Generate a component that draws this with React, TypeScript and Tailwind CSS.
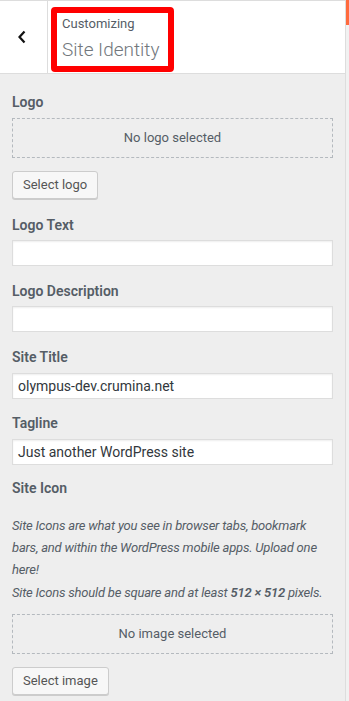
import React from 'react';

const font = "font-['Roboto','Noto_Sans',sans-serif]";

const Label: React.FC<{ text: string; className?: string }> = ({ text, className = '' }) => (
  <div className={`text-[14px] leading-[20px] font-semibold text-[#555d66] ${className}`}>{text}</div>
);

const TextInput: React.FC<{ value?: string; className?: string }> = ({ value = '', className = '' }) => (
  <div
    className={`h-[26px] bg-white border border-[#ddd] shadow-[inset_0_1px_2px_rgba(0,0,0,0.07)] px-[5px] text-[14px] leading-[24px] text-[#32373c] ${className}`}
  >
    {value}
  </div>
);

const Placeholder: React.FC<{ text: string; className?: string }> = ({ text, className = '' }) => (
  <div
    className={`h-[40px] border border-dashed border-[#b4b9be] flex items-center justify-center text-[13px] text-[#555d66] ${className}`}
  >
    {text}
  </div>
);

const Button: React.FC<{ text: string; className?: string }> = ({ text, className = '' }) => (
  <div className={className}>
    <button className="h-[28px] px-[10px] bg-[#f7f7f7] border border-[#ccc] rounded-[3px] shadow-[0_1px_0_#ccc] text-[13px] leading-[26px] text-[#555]">
      {text}
    </button>
  </div>
);

export default function App() {
  return (
    <div className={`flex w-[349px] h-[701px] overflow-hidden ${font}`}>
      <div className="flex-1 flex flex-col bg-[#eee] min-w-0">
        <div className="h-[74px] shrink-0 bg-white border-t border-b border-[#ddd] flex">
          <div className="w-[48px] border-r border-[#ddd] flex items-center justify-center">
            <svg width="10" height="14" viewBox="0 0 10 14" className="-mt-[1px] -ml-[4px]">
              <path d="M7.5 1.5 L2.5 7 L7.5 12.5" fill="none" stroke="#111" strokeWidth="2.2" />
            </svg>
          </div>
          <div className="pl-[3px] pt-[6px]">
            <div className="w-[123px] h-[65px] border-[6px] border-[#f00] rounded-[4px] bg-white pl-[5px] pt-[2px]">
              <div className="text-[13px] leading-[18px] text-[#555d66]">Customizing</div>
              <div className="text-[19px] leading-[26px] font-light text-[#72777c] mt-[4px]">Site Identity</div>
            </div>
          </div>
        </div>

        <div className="px-3 pt-[18px]">
          <Label text="Logo" />
          <Placeholder text="No logo selected" className="mt-[6px]" />
          <Button text="Select logo" className="mt-[13px]" />

          <Label text="Logo Text" className="mt-[16px]" />
          <TextInput className="mt-[5px]" />

          <Label text="Logo Description" className="mt-[15px]" />
          <TextInput className="mt-[5px]" />

          <Label text="Site Title" className="mt-[15px]" />
          <TextInput value="olympus-dev.crumina.net" className="mt-[6px]" />

          <Label text="Tagline" className="mt-[14px]" />
          <TextInput value="Just another WordPress site" className="mt-[6px]" />

          <Label text="Site Icon" className="mt-[13px]" />
          <div className="mt-[17px] text-[13px] leading-[22px] italic text-[#555d66] tracking-[-0.2px]">
            <p>
              Site Icons are what you see in browser tabs, bookmark bars, and within the WordPress mobile apps. Upload
              one here!
            </p>
            <p className="mt-[1px] whitespace-nowrap">
              Site Icons should be square and at least <strong className="font-semibold">512 &times; 512</strong>{' '}
              pixels.
            </p>
          </div>
          <Placeholder text="No image selected" className="mt-[10px]" />
          <Button text="Select image" className="mt-[13px]" />
        </div>
      </div>
      <div className="w-px bg-[#ddd] shrink-0" />
      <div className="w-[3px] bg-[#f1f1f1] shrink-0">
        <div className="h-[25px] bg-[#ff6a3d]" />
      </div>
    </div>
  );
}
